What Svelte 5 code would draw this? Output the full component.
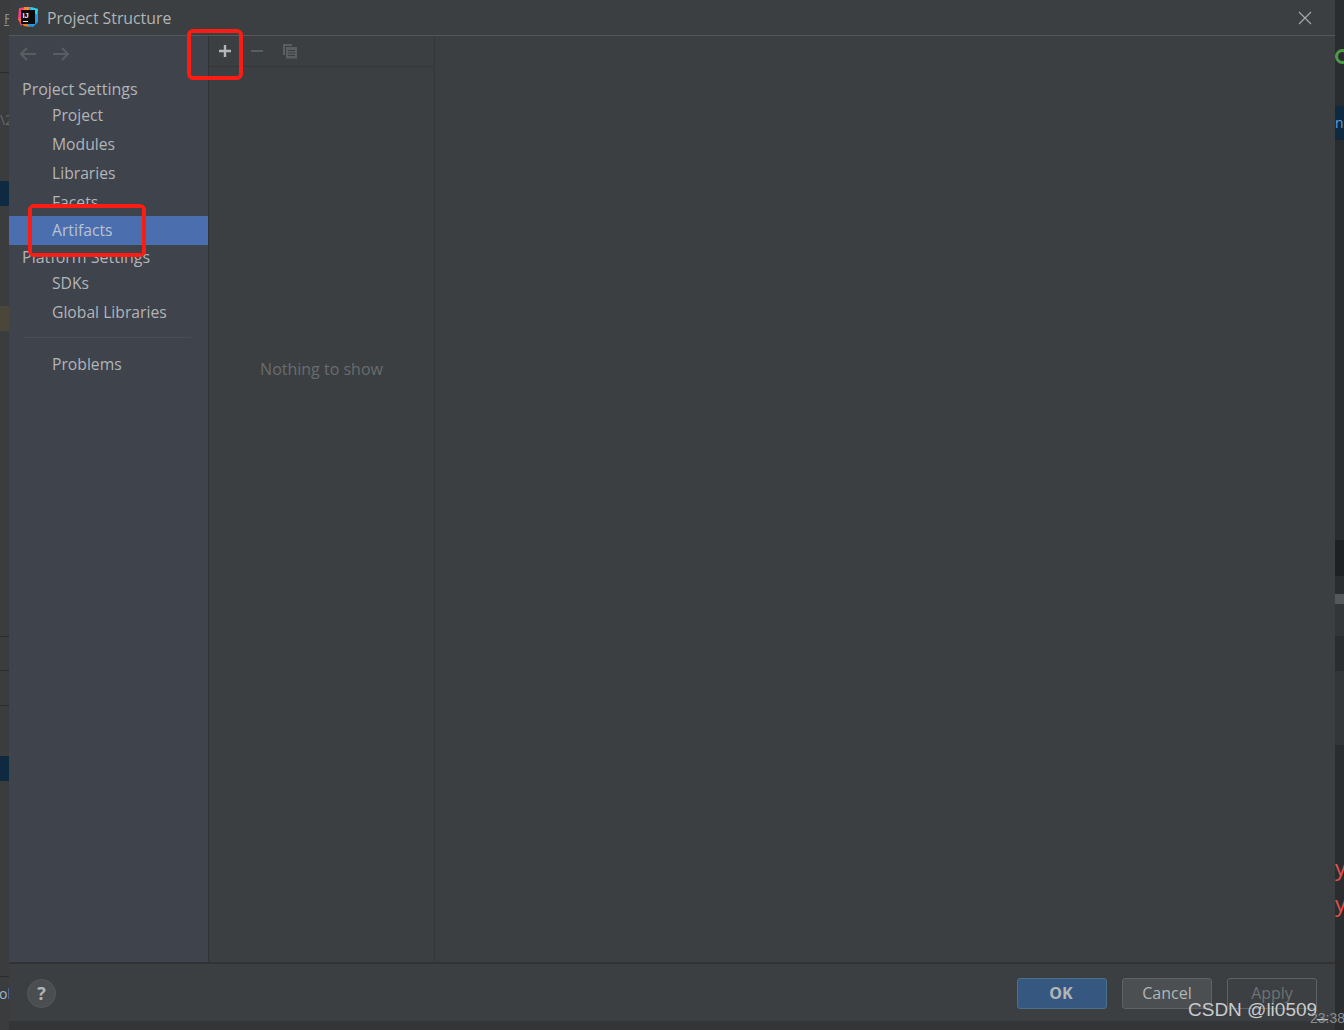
<script lang="ts">
  // sidebar groups, top to bottom
  const projectItems = ['Project', 'Modules', 'Libraries', 'Facets', 'Artifacts'];
  const platformItems = ['SDKs', 'Global Libraries'];
  const selected = 'Artifacts';
</script>

<div class="desktop">
  <!-- bits of the IDE that show behind the dialog -->
  <div class="ide-left">
    <span class="under-f">F</span>
    <span class="under-a">\2</span>
    <i class="strip blue" style="top: 181px"></i>
    <i class="strip tan" style="top: 306px"></i>
    <i class="strip blue" style="top: 756px"></i>
    <i class="rule" style="top: 72px"></i>
    <i class="rule" style="top: 636px"></i>
    <i class="rule" style="top: 670px"></i>
    <i class="rule" style="top: 705px"></i>
    <i class="rule" style="top: 976px"></i>
    <span class="under-ob">ob</span>
  </div>
  <div class="ide-right">
    <span class="green-ring"></span>
    <i class="rule" style="top: 71px"></i>
    <div class="blue-tab" style="top: 106px">n</div>
    <i class="dark-band" style="top: 540px; height: 36px"></i>
    <i class="scroll" style="top: 594px"></i>
    <i class="lighter" style="top: 604px; height: 32px"></i>
    <i class="lighter" style="top: 671px; height: 74px"></i>
    <span class="err" style="top: 852px">y</span>
    <span class="err" style="top: 888px">y</span>
  </div>

  <div class="dialog">
    <header class="titlebar">
      <svg class="logo" width="20" height="20" viewBox="0 0 20 20">
        <path d="M1 1 L10 0 L10 10 L3 19 L0 12 Z" fill="#fc3d7c" />
        <path d="M6 0 L12 0 L11 6 L5 6 Z" fill="#ff8c2e" />
        <path d="M0 12 L6 19 L12 20 L6 11 Z" fill="#f97a12" />
        <path d="M12 0 L20 2 L20 15 L15 20 L10 19 Z" fill="#1f9be8" />
        <path d="M13 0 L20 2 L19 7 L12 6 Z" fill="#2fd0e8" />
        <rect x="3" y="3" width="14" height="14" fill="#0b0b0f" />
        <text x="4.5" y="10.5" class="logo-text">IJ</text>
        <rect x="5" y="14" width="5" height="1" fill="#e8e8e8" />
      </svg>
      <span class="title">Project Structure</span>
      <svg class="close" width="14" height="14" viewBox="0 0 14 14">
        <path d="M1 1 L13 13 M13 1 L1 13" stroke="#a9acae" stroke-width="1.1" fill="none" />
      </svg>
    </header>

    <div class="body">
      <aside class="sidebar">
        <div class="history">
          <svg width="18" height="14" viewBox="0 0 18 14">
            <path d="M17 7 H2 M8 1 L2 7 L8 13" stroke="#5a5e62" stroke-width="2" fill="none" />
          </svg>
          <svg width="18" height="14" viewBox="0 0 18 14">
            <path d="M1 7 H16 M10 1 L16 7 L10 13" stroke="#5a5e62" stroke-width="2" fill="none" />
          </svg>
        </div>

        <h3 class="group first">Project Settings</h3>
        {#each projectItems as item}
          <div class="item" class:active={item === selected}>{item}</div>
        {/each}

        <h3 class="group second">Platform Settings</h3>
        {#each platformItems as item}
          <div class="item">{item}</div>
        {/each}

        <div class="divider"></div>
        <div class="item">Problems</div>
      </aside>

      <section class="list">
        <div class="toolbar">
          <svg width="14" height="14" viewBox="0 0 14 14">
            <path d="M7 1 V13 M1 7 H13" stroke="#b4b7b9" stroke-width="2.4" fill="none" />
          </svg>
          <svg width="14" height="14" viewBox="0 0 14 14">
            <path d="M1 7 H13" stroke="#5a5e62" stroke-width="2" fill="none" />
          </svg>
          <svg width="16" height="16" viewBox="0 0 16 16">
            <path d="M1 1 H10 V3 H3 V12 H1 Z" fill="#5a5e62" />
            <rect x="4" y="4" width="11" height="11.5" fill="#5a5e62" />
            <path d="M6 7.5 H13 M6 10 H13 M6 12.5 H13" stroke="#3c3f41" stroke-width="1" />
          </svg>
        </div>
        <div class="empty">Nothing to show</div>
      </section>

      <main class="detail"></main>
    </div>

    <footer class="footer">
      <button class="help">?</button>
      <div class="actions">
        <button class="btn primary">OK</button>
        <button class="btn">Cancel</button>
        <button class="btn disabled">Apply</button>
      </div>
    </footer>
  </div>

  <!-- hand drawn annotations pasted over the shot -->
  <div class="mark mark-plus"></div>
  <div class="mark mark-artifacts">
    <i class="patch patch-top"></i>
    <i class="patch patch-bottom"></i>
  </div>

  <div class="watermark">CSDN @li0509_</div>
  <span class="under-time">23:38</span>
</div>

<style>
  :global(body) {
    margin: 0;
    background: #2f3030;
  }

  .desktop {
    position: relative;
    width: 1344px;
    height: 1030px;
    overflow: hidden;
    background: #333536;
    font-family: "Open Sans", "Noto Sans", sans-serif;
  }

  .ide-left {
    position: absolute;
    left: 0;
    top: 0;
    width: 9px;
    height: 1030px;
    background: #3a3c3d;
    overflow: hidden;
    color: #8d9092;
    font-size: 14px;
  }

  .ide-left span {
    position: absolute;
    left: 4px;
  }

  .under-f {
    top: 9px;
    text-decoration: underline;
  }

  .under-a {
    top: 110px;
    left: 0 !important;
    color: #66696b;
  }

  .under-ob {
    top: 984px;
    left: -1px !important;
    color: #a4b5c6;
  }

  .strip {
    position: absolute;
    left: 0;
    width: 9px;
    height: 25px;
  }

  .strip.blue {
    background: #0e2a40;
  }

  .strip.tan {
    background: #4a463a;
  }

  .rule {
    position: absolute;
    left: 0;
    right: 0;
    height: 1px;
    background: #2a2b2c;
  }

  .ide-right {
    position: absolute;
    left: 1335px;
    top: 0;
    width: 9px;
    height: 1030px;
    background: #2b2c2d;
    overflow: hidden;
  }

  .green-ring {
    position: absolute;
    left: 0;
    top: 49px;
    box-sizing: border-box;
    width: 15px;
    height: 15px;
    border: 3px solid #4d9a4a;
    border-radius: 50%;
  }

  .blue-tab {
    position: absolute;
    left: 0;
    width: 9px;
    height: 34px;
    background: #0e2a40;
    color: #5c9fdc;
    font-size: 14px;
    line-height: 34px;
    overflow: hidden;
  }

  .dark-band {
    position: absolute;
    left: 0;
    width: 9px;
    background: #1f2021;
  }

  .scroll {
    position: absolute;
    left: 0;
    width: 9px;
    height: 10px;
    background: #565758;
  }

  .lighter {
    position: absolute;
    left: 0;
    width: 9px;
    background: #343536;
  }

  .err {
    position: absolute;
    left: 0;
    color: #e0524c;
    font-size: 22px;
    line-height: 30px;
  }

  .dialog {
    position: absolute;
    left: 9px;
    top: 0;
    width: 1326px;
    height: 1021px;
    display: flex;
    flex-direction: column;
    background: #3b3f42;
    color: #b2b5b7;
  }

  .titlebar {
    height: 35px;
    flex: none;
    display: flex;
    align-items: center;
    border-bottom: 1px solid #54575a;
    padding-left: 9px;
    padding-right: 23px;
  }

  .logo {
    flex: none;
    margin-top: -1px;
  }

  .logo-text {
    font-family: "Liberation Sans", sans-serif;
    font-size: 7.5px;
    font-weight: 700;
    fill: #f0f0f0;
  }

  .title {
    margin-left: 9px;
    font-size: 15.8px;
    margin-top: 1px;
    color: #b2b5b7;
  }

  .close {
    margin-left: auto;
  }

  .body {
    flex: 1;
    display: flex;
    min-height: 0;
  }

  .sidebar {
    width: 199px;
    flex: none;
    background: #3f434c;
    border-right: 1px solid #313335;
    display: flex;
    flex-direction: column;
  }

  .history {
    height: 36px;
    display: flex;
    align-items: center;
    gap: 15px;
    padding-left: 10px;
    flex: none;
  }

  .group {
    margin: 0;
    font-weight: 400;
    font-size: 16px;
    line-height: 20px;
    padding-left: 13px;
    color: #b2b5b7;
  }

  .group.first {
    margin-top: 7px;
    margin-bottom: 2px;
  }

  .group.second {
    margin-top: 2px;
    margin-bottom: 2px;
  }

  .item {
    height: 29px;
    line-height: 29px;
    padding-left: 43px;
    font-size: 15.7px;
    color: #b2b5b7;
    flex: none;
  }

  .item.active {
    margin-top: -1px;
    background: #4b6eaf;
    color: #b9c3d2;
  }

  .divider {
    height: 1px;
    background: #494c53;
    margin: 10px 17px 12px 14px;
    flex: none;
  }

  .list {
    width: 225px;
    flex: none;
    border-right: 1px solid #33363a;
    display: flex;
    flex-direction: column;
  }

  .toolbar {
    height: 30px;
    border-bottom: 1px solid #33363a;
    display: flex;
    align-items: center;
    gap: 18px;
    padding-left: 9px;
    flex: none;
  }

  .toolbar svg:first-child {
    margin-top: -1px;
  }

  .empty {
    text-align: center;
    margin-top: 292px;
    font-size: 16px;
    color: #696c6e;
    line-height: 20px;
  }

  .detail {
    flex: 1;
  }

  .footer {
    height: 57px;
    flex: none;
    border-top: 2px solid #303234;
    display: flex;
    align-items: center;
    padding: 0 18px;
  }

  .help {
    width: 29px;
    height: 29px;
    border-radius: 50%;
    border: 1px solid #54585a;
    background: #4a4e50;
    color: #b0b3b5;
    font-family: inherit;
    font-size: 18px;
    font-weight: 700;
    padding: 0;
    margin-top: 1px;
  }

  .actions {
    margin-left: auto;
    display: flex;
    gap: 15px;
    margin-top: 1px;
  }

  .btn {
    width: 90px;
    height: 31px;
    box-sizing: border-box;
    border-radius: 3px;
    border: 1px solid #5e6264;
    background: #4b4f51;
    color: #b2b5b7;
    font-family: inherit;
    font-size: 16px;
    padding: 0;
  }

  .btn.primary {
    background: #365880;
    border-color: #4c708c;
    font-weight: 700;
    padding-right: 2px;
  }

  .btn.disabled {
    background: #3c4043;
    color: #6f7274;
  }

  .mark {
    position: absolute;
    border: 4px solid #fb1d14;
    border-radius: 6px;
    box-sizing: border-box;
  }

  .mark-plus {
    left: 187px;
    top: 29px;
    width: 56px;
    height: 51px;
  }

  .mark-artifacts {
    left: 28px;
    top: 204px;
    width: 118px;
    height: 53px;
  }

  .patch {
    position: absolute;
    left: 0;
    right: 0;
    background: #3f434c;
  }

  .patch-top {
    top: 0;
    height: 8px;
  }

  .patch-bottom {
    top: 37px;
    height: 8px;
  }

  .watermark {
    position: absolute;
    left: 1188px;
    top: 998px;
    font-family: "Liberation Sans", sans-serif;
    font-size: 19px;
    line-height: 24px;
    color: #c9cbcc;
  }

  .under-time {
    position: absolute;
    left: 1310px;
    top: 1010px;
    font-family: "Liberation Sans", sans-serif;
    font-size: 14px;
    color: #8b8d8e;
  }
</style>
